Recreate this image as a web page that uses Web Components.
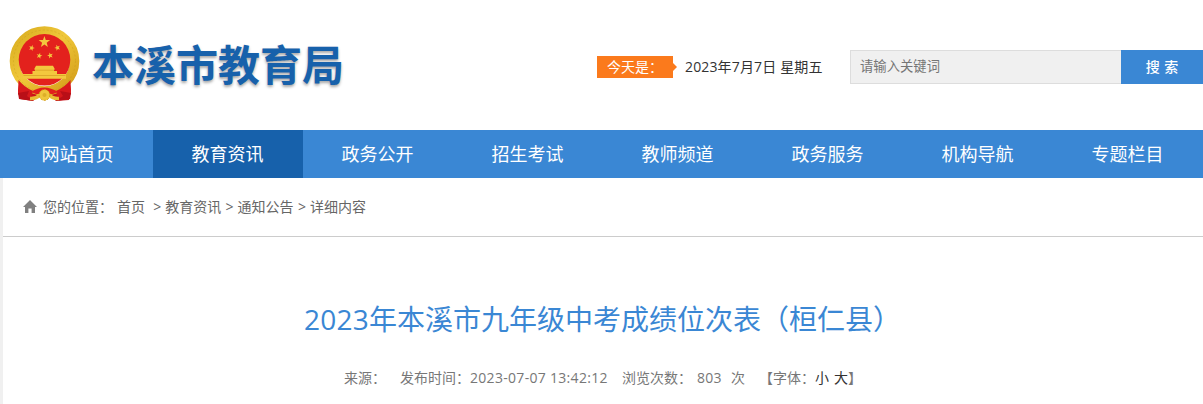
<!DOCTYPE html>
<html lang="zh-CN">
<head>
<meta charset="utf-8">
<title>本溪市教育局</title>
<style>
  body {
    margin: 0;
    width: 1203px;
    height: 404px;
    overflow: hidden;
    background: #fff;
    color: #666;
    font: 14px/20px "Open Sans", "Noto Sans CJK SC", sans-serif;
  }
</style>
</head>
<body>
<site-header>
  <site-logo slot="logo">本溪市教育局</site-logo>
  <today-date label="今天是：">2023年7月7日 星期五</today-date>
  <search-box placeholder="请输入关键词">搜 索</search-box>
</site-header>
<nav-bar>
  <nav-item>网站首页</nav-item>
  <nav-item active>教育资讯</nav-item>
  <nav-item>政务公开</nav-item>
  <nav-item>招生考试</nav-item>
  <nav-item>教师频道</nav-item>
  <nav-item>政务服务</nav-item>
  <nav-item>机构导航</nav-item>
  <nav-item>专题栏目</nav-item>
</nav-bar>
<page-content>
  <bread-crumb>
    <span>首页</span>
    <span>教育资讯</span>
    <span>通知公告</span>
    <span>详细内容</span>
  </bread-crumb>
  <article-head source="" time="2023-07-07 13:42:12" views="803">
    <span class="year">2023</span>年本溪市九年级中考成绩位次表（桓仁县）
  </article-head>
</page-content>

<script>
// Attach an open shadow root filled with the given markup
function render(el, html) {
  el.attachShadow({mode: 'open'}).innerHTML = html;
}

customElements.define('site-header', class extends HTMLElement {
  constructor() {
    super();
    render(this, `
    <style>
    :host {
      display: flex;
      height: 130px;
    }
    .logo {
      width: 597px;
    }
    </style>
    <div class="logo"><slot name="logo"></slot></div>
    <slot></slot>
    `);
  }
});

customElements.define('site-logo', class extends HTMLElement {
  constructor() {
    super();
    render(this, `
    <style>
    :host {
      display: flex;
      padding: 26px 0 0 9px;
      white-space: nowrap;
    }
    svg {
      flex: none;
      width: 72px;
      height: 76px;
    }
    .name {
      margin: 7px 0 0 11px;
      color: #1761ab;
      font: bold 42px/60px "Noto Sans CJK SC", sans-serif;
      text-shadow: 0 2px 3px rgba(0, 0, 0, .35);
    }
    </style>
    <svg viewBox="0 0 72 76">
      <defs>
        <linearGradient id="gold" x1="0" y1="0" x2="1" y2="1">
          <stop offset="0" stop-color="#d9ad20"/>
          <stop offset=".45" stop-color="#f0c83a"/>
          <stop offset="1" stop-color="#d39c18"/>
        </linearGradient>
        <path id="star" d="M0-6 1.4-1.9 5.7-1.9 2.3.7 3.5 4.9 0 2.4-3.5 4.9-2.3.7-5.7-1.9-1.4-1.9Z"/>
      </defs>
      <!-- ribbon behind the wreath -->
      <path d="M11 52 22 64 50 64 60 52 62 64 60 74 47 75 42 70 30 70 24 75 11 73 9 65Z" fill="#c9141a"/>
      <circle cx="35.5" cy="35" r="30" fill="none" stroke="url(#gold)" stroke-width="9.6"/>
      <circle cx="35.5" cy="35" r="31" fill="none" stroke="#bd8d14" stroke-width="1" stroke-dasharray="2 2" opacity=".3"/>
      <circle cx="35.5" cy="33.8" r="25.8" fill="#e3211d"/>
      <g fill="#f3c83e">
        <use href="#star" transform="translate(35.4 16)"/>
        <use href="#star" transform="translate(22.7 22) scale(.52) rotate(20)"/>
        <use href="#star" transform="translate(48.4 21.8) scale(.52) rotate(-20)"/>
        <use href="#star" transform="translate(30.3 29.8) scale(.52) rotate(15)"/>
        <use href="#star" transform="translate(41.2 29.5) scale(.52) rotate(-15)"/>
        <path d="M27 39.7H44L46 43.5H45V45H48V48H57V52.8H14V48H23.5V45H26V43.5H25Z"/>
      </g>
      <path d="M25.5 44.2H45.5M14.5 49.5H56.5" stroke="#c98a18" stroke-width=".5"/>
      <!-- ribbon tails and rosette -->
      <path d="M9.5 54Q15 61 24 65L22 71Q14 74 9 68ZM61.5 54Q56 61 47 65L49 71Q57 74 62 68Z" fill="#d8191c"/>
      <path d="M9 67 20 65 18 70 24 75 10 73ZM62 67 51 65 54 70 47 75 61 73Z" fill="#b90f17"/>
      <path d="M22 66Q35 57 49 66L44 68H27Z" fill="#e2201c"/>
      <path d="M21 72.5Q27 73 31 69M50 72.5Q44 73 40 69" fill="none" stroke="#e9bd34" stroke-width="3.4"/>
      <circle cx="35.5" cy="69" r="5.4" fill="#efc63c" stroke="#d39c18" stroke-width="1" stroke-dasharray="2 1.5"/>
      <circle cx="35.5" cy="69" r="2" fill="#dcae28"/>
    </svg>
    <div class="name"><slot></slot></div>
    `);
  }
});

customElements.define('today-date', class extends HTMLElement {
  constructor() {
    super();
    render(this, `
    <style>
    :host {
      display: flex;
      align-items: center;
      width: 253px;
      height: 22px;
      margin-top: 56px;
      color: #333;
      white-space: nowrap;
    }
    .label {
      width: 66px;
      padding-left: 10px;
      background: #fb7a1c;
      color: #fff;
      line-height: 22px;
    }
    .arrow {
      width: 4px;
      height: 8px;
      margin-right: 8px;
      background: #fb7a1c;
      clip-path: polygon(0 0, 100% 50%, 0 100%);
    }
    .date {
      letter-spacing: .15px;
    }
    </style>
    <div class="label">${this.getAttribute('label')}</div>
    <div class="arrow"></div>
    <div class="date"><slot></slot></div>
    `);
  }
});

customElements.define('search-box', class extends HTMLElement {
  constructor() {
    super();
    render(this, `
    <style>
    :host {
      display: flex;
      flex: 1;
      height: 34px;
      margin-top: 50px;
    }
    .field {
      box-sizing: border-box;
      width: 271px;
      padding-left: 9px;
      border: 1px solid #ddd;
      border-right: 0;
      background: #f0f0f0;
      color: #757575;
      font-size: 13.33px;
      line-height: 31px;
    }
    .button {
      flex: 1;
      background: #3a87d4;
      color: #fff;
      font-weight: 500;
      line-height: 34px;
      text-align: center;
      word-spacing: 1px;
    }
    </style>
    <div class="field">${this.getAttribute('placeholder')}</div>
    <div class="button"><slot></slot></div>
    `);
  }
});

customElements.define('nav-bar', class extends HTMLElement {
  constructor() {
    super();
    render(this, `
    <style>
    :host {
      display: flex;
      height: 48px;
      padding-left: 3px;
      background: #3a87d4;
    }
    </style>
    <slot></slot>
    `);
  }
});

customElements.define('nav-item', class extends HTMLElement {
  constructor() {
    super();
    render(this, `
    <style>
    :host {
      display: block;
      box-sizing: border-box;
      width: 150px;
      padding-right: 1px;
      color: #fff;
      font-size: 18px;
      line-height: 49px;
      text-align: center;
    }
    :host([active]) {
      background: #1761ab;
    }
    </style>
    <slot></slot>
    `);
  }
});

customElements.define('page-content', class extends HTMLElement {
  constructor() {
    super();
    render(this, `
    <style>
    :host {
      display: block;
      height: 226px;
      border-left: 3px solid #f0f0f0;
    }
    </style>
    <slot></slot>
    `);
  }
});

customElements.define('bread-crumb', class extends HTMLElement {
  constructor() {
    super();
    render(this, `
    <style>
    :host {
      display: flex;
      align-items: center;
      height: 58px;
      padding-left: 20px;
      border-bottom: 1px solid #ccc;
      white-space: nowrap;
    }
    svg {
      width: 14px;
      height: 14px;
      margin-right: 6px;
    }
    .here {
      width: 74px;
    }
    ::slotted(span:first-of-type) {
      margin-right: 4px;
    }
    ::slotted(span:not(:first-of-type))::before {
      content: ">";
      display: inline-block;
      width: 12px;
      margin-left: 4.3px;
    }
    </style>
    <svg viewBox="0 0 14 14"><path d="M7 0 14 7H12V13H8.6V8.5H5.4V13H2V7H0Z" fill="#808080"/></svg>
    <div class="here">您的位置：</div>
    <slot></slot>
    `);
  }
});

customElements.define('article-head', class extends HTMLElement {
  constructor() {
    super();
    render(this, `
    <style>
    :host {
      display: block;
      color: #777;
      white-space: nowrap;
    }
    h1 {
      margin: 62px 0 0 301px;
      color: #3a87d4;
      font-size: 28px;
      font-weight: normal;
      line-height: 40px;
    }
    ::slotted(.year) {
      letter-spacing: .25px;
    }
    .info {
      display: flex;
      margin: 29px 0 0 341px;
    }
    .source { width: 56px; }
    .label { width: 70px; }
    .time { width: 152px; letter-spacing: .3px; }
    .views { width: 75px; }
    .count { width: 34px; letter-spacing: .2px; }
    .unit { width: 28px; }
    b {
      color: #333;
      font-weight: normal;
    }
    b + b {
      margin-left: 5px;
    }
    </style>
    <h1><slot></slot></h1>
    <div class="info">
      <div class="source">来源：${this.getAttribute('source')}</div>
      <div class="label">发布时间：</div>
      <div class="time">${this.getAttribute('time')}</div>
      <div class="views">浏览次数：</div>
      <div class="count">${this.getAttribute('views')}</div>
      <div class="unit">次</div>
      <div>【字体：<b>小</b><b>大</b>】</div>
    </div>
    `);
  }
});
</script>
</body>
</html>
